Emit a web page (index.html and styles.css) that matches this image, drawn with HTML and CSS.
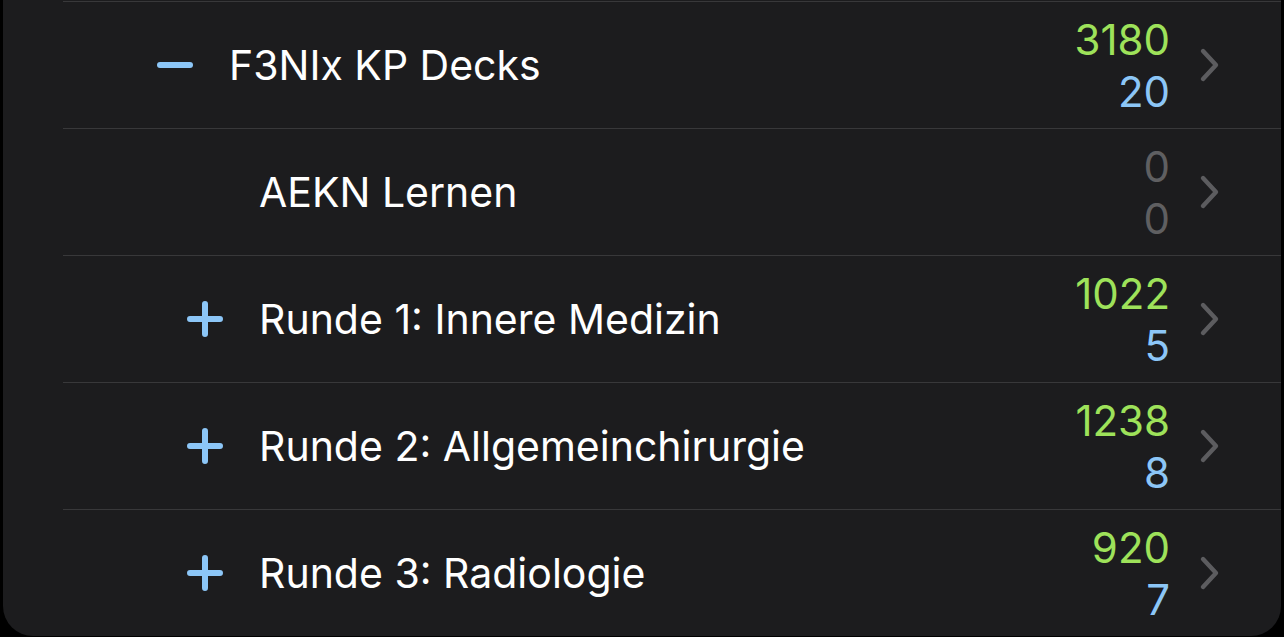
FILE: index.html
```html
<!DOCTYPE html>
<html lang="de">
<head>
<meta charset="utf-8">
<link rel="stylesheet" href="styles.css">
</head>
<body>
<div class="card">
  <div class="row level0">
    <div class="toggle">
      <svg width="36" height="36" viewBox="0 0 36 36"><path d="M3 18H33" stroke="#8cc6f7" stroke-width="6" stroke-linecap="round"/></svg>
    </div>
    <div class="name">F3NIx KP Decks</div>
    <div class="counts"><span class="new">3180</span><span class="due">20</span></div>
    <svg class="chev" width="24" height="36" viewBox="0 0 24 36"><path d="M5 4L18 18L5 32" fill="none" stroke="#5c5c5f" stroke-width="4.4" stroke-linecap="round" stroke-linejoin="round"/></svg>
  </div>
  <div class="row level1">
    <div class="toggle"></div>
    <div class="name">AEKN Lernen</div>
    <div class="counts"><span class="zero">0</span><span class="zero">0</span></div>
    <svg class="chev" width="24" height="36" viewBox="0 0 24 36"><path d="M5 4L18 18L5 32" fill="none" stroke="#5c5c5f" stroke-width="4.4" stroke-linecap="round" stroke-linejoin="round"/></svg>
  </div>
  <div class="row level1">
    <div class="toggle">
      <svg width="36" height="36" viewBox="0 0 36 36"><path d="M3 18H33M18 3V33" stroke="#8cc6f7" stroke-width="6" stroke-linecap="round"/></svg>
    </div>
    <div class="name">Runde 1: Innere Medizin</div>
    <div class="counts"><span class="new">1022</span><span class="due">5</span></div>
    <svg class="chev" width="24" height="36" viewBox="0 0 24 36"><path d="M5 4L18 18L5 32" fill="none" stroke="#5c5c5f" stroke-width="4.4" stroke-linecap="round" stroke-linejoin="round"/></svg>
  </div>
  <div class="row level1">
    <div class="toggle">
      <svg width="36" height="36" viewBox="0 0 36 36"><path d="M3 18H33M18 3V33" stroke="#8cc6f7" stroke-width="6" stroke-linecap="round"/></svg>
    </div>
    <div class="name">Runde 2: Allgemeinchirurgie</div>
    <div class="counts"><span class="new">1238</span><span class="due">8</span></div>
    <svg class="chev" width="24" height="36" viewBox="0 0 24 36"><path d="M5 4L18 18L5 32" fill="none" stroke="#5c5c5f" stroke-width="4.4" stroke-linecap="round" stroke-linejoin="round"/></svg>
  </div>
  <div class="row level1">
    <div class="toggle">
      <svg width="36" height="36" viewBox="0 0 36 36"><path d="M3 18H33M18 3V33" stroke="#8cc6f7" stroke-width="6" stroke-linecap="round"/></svg>
    </div>
    <div class="name">Runde 3: Radiologie</div>
    <div class="counts"><span class="new">920</span><span class="due">7</span></div>
    <svg class="chev" width="24" height="36" viewBox="0 0 24 36"><path d="M5 4L18 18L5 32" fill="none" stroke="#5c5c5f" stroke-width="4.4" stroke-linecap="round" stroke-linejoin="round"/></svg>
  </div>
</div>
</body>
</html>
```

FILE: styles.css
```css
html, body {
  margin: 0;
  padding: 0;
  background: #000;
  height: 637px;
  overflow: hidden;
}
body {
  font-family: Inter, "Noto Sans", sans-serif;
  color: #fff;
}
.card {
  margin-left: 3px;
  width: 1278px;
  height: 636px;
  padding-top: 1px;
  box-sizing: border-box;
  background: #1c1c1e;
  border-radius: 0 0 30px 30px;
  overflow: hidden;
}
.row {
  height: 126px;
  border-top: 1px solid #38383a;
  margin-left: 60px;
  display: flex;
  align-items: center;
  box-sizing: content-box;
}
.toggle {
  width: 36px;
  height: 36px;
  flex: none;
  display: flex;
}
.level0 .toggle { margin-left: 94px; }
.level1 .toggle { margin-left: 124px; }
.name {
  margin-left: 36px;
  flex: 1;
  font-size: 41px;
  white-space: nowrap;
}
.counts {
  display: flex;
  flex-direction: column;
  align-items: flex-end;
  font-size: 42px;
  line-height: 52px;
  margin-top: 2px;
}
.new { color: #9ee25a; }
.due { color: #8cc6f7; }
.zero { color: #5f5f61; }
.chev {
  flex: none;
  margin-left: 28px;
  margin-right: 59px;
}
```
